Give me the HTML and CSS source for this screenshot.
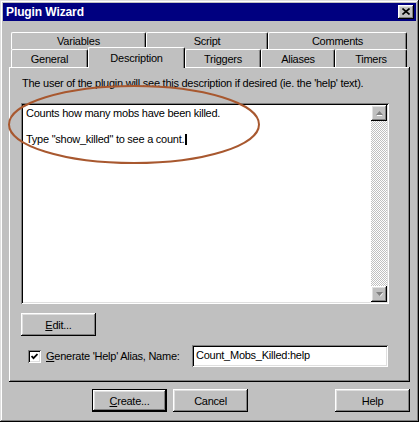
FILE: index.html
```html
<!DOCTYPE html>
<html lang="en">
<head>
  <meta charset="UTF-8">
  <title>Plugin Wizard</title>
  <link rel="stylesheet" href="styles.css">
</head>
<body>

  <div class="window">
    <div class="titlebar">
      <span class="title">Plugin Wizard</span>
      <button class="close raised" type="button">
        <svg width="8" height="7" viewBox="0 0 8 7"><path d="M0.5 0.5 L7.5 6.5 M7.5 0.5 L0.5 6.5" stroke="#000" stroke-width="1.6" fill="none"/></svg>
      </button>
    </div>

    <div class="client">
      <!-- two rows of tabs, the selected one sits on the front row -->
      <div class="tabs">
        <div class="tab-row back">
          <div class="tab" style="width:135px">Variables</div>
          <div class="tab" style="width:122px">Script</div>
          <div class="tab" style="width:139px">Comments</div>
        </div>
        <div class="tab-row front">
          <div class="tab" style="width:77px">General</div>
          <div class="tab selected" style="width:97px">Description</div>
          <div class="tab" style="width:76px">Triggers</div>
          <div class="tab" style="width:74px">Aliases</div>
          <div class="tab" style="width:72px">Timers</div>
        </div>
      </div>

      <div class="panel">
        <p class="hint">The user of the plugin will see this description if desired (ie. the 'help' text).</p>

        <div class="memo sunken">
          <div class="memo-text">
            <div>Counts how many mobs have been killed.</div>
            <div>&nbsp;</div>
            <div>Type "show_killed" to see a count.<span class="caret"></span></div>
          </div>
          <div class="scrollbar">
            <div class="arrow raised">
              <svg width="7" height="5" viewBox="0 0 7 5"><path d="M1 4 L6 4 L6 5 L1 5 Z" fill="#fff"/><path d="M3.5 0 L7 4 L0 4 Z" fill="#808080"/></svg>
            </div>
            <div class="track"></div>
            <div class="arrow raised">
              <svg width="7" height="5" viewBox="0 0 7 5"><path d="M0 0 L7 0 L3.5 4 Z" fill="#808080"/><path d="M4 4 L6.5 1 L7 1.5 L4.5 4.5 Z" fill="#fff"/></svg>
            </div>
          </div>
        </div>

        <button class="btn raised edit" type="button"><u>E</u>dit...</button>

        <div class="alias-row">
          <span class="check sunken">
            <svg width="7" height="7" viewBox="0 0 7 7"><path d="M0.5 3 L2.5 5.2 L6.5 1" stroke="#000" stroke-width="1.8" fill="none"/></svg>
          </span>
          <label class="check-label"><u>G</u>enerate 'Help' Alias, Name:</label>
          <div class="field sunken">Count_Mobs_Killed:help</div>
        </div>
      </div>

      <div class="actions">
        <button class="btn raised default" type="button"><u>C</u>reate...</button>
        <button class="btn raised" type="button">Cancel</button>
        <button class="btn raised help" type="button">Help</button>
      </div>
    </div>

    <svg class="mark" width="419" height="422" viewBox="0 0 419 422">
      <ellipse cx="134" cy="124.5" rx="125" ry="38.5" fill="none" stroke="#a8582f" stroke-width="2"/>
    </svg>
  </div>

</body>
</html>
```

FILE: styles.css
```css
* {
  box-sizing: border-box;
}
body {
  margin: 0;
  background: #c0c0c0;
  font-family: "Liberation Sans", Arial, sans-serif;
  font-size: 11px;
  letter-spacing: -0.25px;
  color: #000;
}
.window {
  position: relative;
  width: 419px;
  height: 422px;
  padding: 3px;
  background: #c0c0c0;
  box-shadow: inset -1px -1px #000, inset 1px 1px #dfdfdf, inset -2px -2px #808080, inset 2px 2px #fff;
}
.raised {
  background: #c0c0c0;
  box-shadow: inset -1px -1px #000, inset 1px 1px #fff, inset -2px -2px #808080, inset 2px 2px #dfdfdf;
}
.sunken {
  background: #fff;
  box-shadow: inset 1px 1px #808080, inset -1px -1px #fff, inset 2px 2px #000, inset -2px -2px #dfdfdf;
}
.titlebar {
  display: flex;
  align-items: center;
  justify-content: space-between;
  height: 18px;
  padding: 0 2px 0 3px;
  background: #000080;
  color: #fff;
}
.title {
  font-weight: bold;
  font-size: 12px;
  letter-spacing: -0.1px;
}
.close {
  display: flex;
  align-items: center;
  justify-content: center;
  width: 16px;
  height: 14px;
  padding: 0 0 1px 0;
  border: none;
}
.client {
  padding: 11px 6px 0 6px;
}
.tabs {
  margin: 0 3px 0 2px;
}
.tab-row {
  display: flex;
}
.tab {
  display: flex;
  align-items: center;
  justify-content: center;
  height: 17px;
  border-top: 1px solid #fff;
  border-left: 1px solid #fff;
  border-right: 1px solid #000;
  border-radius: 2px 2px 0 0;
  box-shadow: inset -1px 0 #808080;
  background: #c0c0c0;
}
.front .tab {
  height: 18px;
}
.front .tab.selected {
  height: 21px;
  margin-top: -2px;
  margin-bottom: -1px;
  padding-bottom: 1px;
  z-index: 1;
}
.panel {
  height: 315px;
  padding: 10px 0 0 12px;
  box-shadow: inset -1px -1px #000, inset 1px 1px #fff, inset -2px -2px #808080;
}
.hint {
  margin: 0 0 13px 1px;
  line-height: 13px;
}
.memo {
  display: flex;
  width: 368px;
  height: 201px;
  padding: 2px;
}
.memo-text {
  flex: 1;
  padding: 2px 3px;
  line-height: 13px;
}
.caret {
  display: inline-block;
  width: 2px;
  height: 11px;
  margin-left: 1px;
  vertical-align: -2px;
  background: #000;
}
.scrollbar {
  display: flex;
  flex-direction: column;
  width: 16px;
}
.arrow {
  display: flex;
  align-items: center;
  justify-content: center;
  height: 16px;
}
.track {
  flex: 1;
  background: repeating-conic-gradient(#fff 0 25%, #c0c0c0 0 50%) 0 0 / 2px 2px;
}
.btn {
  width: 75px;
  height: 23px;
  padding: 0;
  border: none;
  font-family: inherit;
  font-size: 11px;
  letter-spacing: -0.25px;
  color: #000;
}
.edit {
  display: block;
  margin-top: 9px;
}
.alias-row {
  display: flex;
  align-items: center;
  width: 367px;
  margin-top: 9px;
}
.check {
  display: flex;
  align-items: center;
  justify-content: center;
  width: 13px;
  height: 13px;
  margin-left: 7px;
}
.check-label {
  margin-left: 5px;
}
.field {
  width: 196px;
  height: 22px;
  margin-left: auto;
  padding: 4px 4px 0;
  line-height: 13px;
  font-size: 11px;
}
.actions {
  display: flex;
  gap: 6px;
  margin-top: 7px;
}
.default {
  margin-left: 83px;
  box-shadow: inset 0 0 0 1px #000, inset -2px -2px #000, inset 2px 2px #fff, inset -3px -3px #808080, inset 3px 3px #dfdfdf;
}
.help {
  margin-left: auto;
}
.mark {
  position: absolute;
  left: 0;
  top: 0;
  pointer-events: none;
}
```
